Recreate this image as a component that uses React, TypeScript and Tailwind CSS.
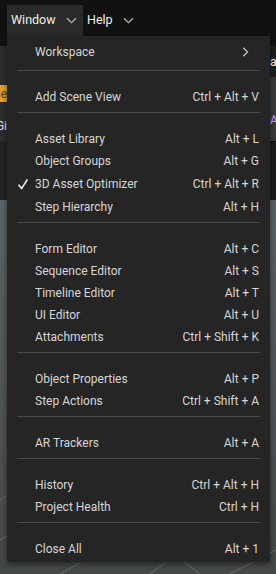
import { Fragment } from 'react';

type Item = { label: string; keys?: string; checked?: boolean; submenu?: boolean };

const sections: Item[][] = [
  [{ label: 'Workspace', submenu: true }],
  [{ label: 'Add Scene View', keys: 'Ctrl + Alt + V' }],
  [
    { label: 'Asset Library', keys: 'Alt + L' },
    { label: 'Object Groups', keys: 'Alt + G' },
    { label: '3D Asset Optimizer', keys: 'Ctrl + Alt + R', checked: true },
    { label: 'Step Hierarchy', keys: 'Alt + H' },
  ],
  [
    { label: 'Form Editor', keys: 'Alt + C' },
    { label: 'Sequence Editor', keys: 'Alt + S' },
    { label: 'Timeline Editor', keys: 'Alt + T' },
    { label: 'UI Editor', keys: 'Alt + U' },
    { label: 'Attachments', keys: 'Ctrl + Shift + K' },
  ],
  [
    { label: 'Object Properties', keys: 'Alt + P' },
    { label: 'Step Actions', keys: 'Ctrl + Shift + A' },
  ],
  [{ label: 'AR Trackers', keys: 'Alt + A' }],
  [
    { label: 'History', keys: 'Ctrl + Alt + H' },
    { label: 'Project Health', keys: 'Ctrl + H' },
  ],
  [{ label: 'Close All', keys: 'Alt + 1' }],
];

function ChevronDown() {
  return (
    <svg width="11" height="7" viewBox="0 0 11 7" fill="none" className="text-[#b5b5b5]">
      <path d="M1 1.2 L5.5 5.6 L10 1.2" stroke="currentColor" strokeWidth="1.2" />
    </svg>
  );
}

function MenuRow({ item }: { item: Item }) {
  return (
    <div className={`relative flex items-center justify-between pl-[28px] pr-[11px] ${item.checked ? 'h-[24px]' : 'h-[22px]'}`}>
      {item.checked && (
        <svg width="10" height="11" viewBox="0 0 10 11" fill="none" className="absolute left-[11px] top-[7px]">
          <path d="M1 6.2 L3.6 9.6 L9 1" stroke="#e6e6e6" strokeWidth="1.7" strokeLinecap="round" strokeLinejoin="round" />
        </svg>
      )}
      <span className="text-[12px] text-[#d6d6d6]">{item.label}</span>
      {item.keys && <span className="text-[12px] text-[#d6d6d6]">{item.keys}</span>}
      {item.submenu && (
        <svg width="7" height="10" viewBox="0 0 7 10" fill="none" className="mr-[10px] text-[#c8c8c8]">
          <path d="M1.2 0.8 L5.6 5 L1.2 9.2" stroke="currentColor" strokeWidth="1.2" />
        </svg>
      )}
    </div>
  );
}

export default function App() {
  return (
    <div className="relative h-[574px] w-[276px] overflow-hidden bg-[#111111]" style={{ fontFamily: 'Roboto, "Liberation Sans", sans-serif' }}>
      {/* Top menu bar */}
      <div className="flex h-[46px] items-start bg-[#111111] pl-[7px] pt-[5px]">
        <div className="flex h-[31px] w-[76px] items-center gap-[10px] bg-[#2a2a2a] pl-[4px]">
          <span className="text-[12.5px] text-[#eeeeee]">Window</span>
          <ChevronDown />
        </div>
        <div className="flex h-[31px] items-center gap-[10px] pl-[4px]">
          <span className="text-[12.5px] text-[#eeeeee]">Help</span>
          <ChevronDown />
        </div>
      </div>

      {/* Toolbar area behind the menu */}
      <div className="flex h-[95px]">
        <div className="flex w-[7px] flex-col overflow-hidden bg-[#2d2d2d]">
          <div className="mt-[39px] flex h-[17px] w-[7px] items-center justify-end bg-[#e3a02c] text-[12px] text-[#5a3a08]">
            <span className="whitespace-nowrap">ie</span>
          </div>
          <div className="mt-[15px] flex w-[7px] justify-end text-[12px] text-[#e0e0ff]">
            <span className="whitespace-nowrap">Gi</span>
          </div>
        </div>
        <div className="flex-1 bg-[#2d2d2d]" />
        <div className="flex w-[6px] flex-col overflow-hidden">
          <div className="flex h-[31px] items-center bg-[#1f1f1f] pt-[1px] text-[12px] text-white">
            <span className="whitespace-nowrap">at</span>
          </div>
          <div className="flex flex-1 items-end bg-[#3b3b3b] pb-[12px] text-[12px] text-[#c4a0ff]">
            <span className="whitespace-nowrap">AI</span>
          </div>
        </div>
      </div>
      <div className="flex h-[59px]">
        <div className="flex-1 border-t border-[#2a2a2a] bg-[#232323]" />
        <div className="flex-1 border-t border-[#0c0c0c] bg-[#1c1c1c]" />
      </div>

      {/* Viewport */}
      <div className="relative h-[374px] bg-gradient-to-b from-[#5d6467] to-[#454849]">
        <svg className="absolute inset-0" width="276" height="374" viewBox="0 0 276 374" fill="none">
          <path d="M0 300 L70 260 M0 340 L40 318 M150 374 L210 330 M60 374 L120 340 M230 374 L276 350 M200 374 L176 356" stroke="#6a6e6f" strokeWidth="1" />
        </svg>
      </div>

      {/* Dropdown menu */}
      <div className="absolute left-[7px] top-[36px] w-[263px] bg-[#252525] pb-[2px] pt-[5px] shadow-[0_2px_6px_rgba(0,0,0,0.5)]">
        {sections.map((section, i) => (
          <Fragment key={i}>
            {i > 0 && <div className={`mx-[10px] mb-[15px] h-px bg-[#4a4a4a] ${i === 1 ? 'mt-[7px]' : 'mt-[4px]'}`} />}
            {section.map((item) => (
              <MenuRow key={item.label} item={item} />
            ))}
          </Fragment>
        ))}
      </div>
    </div>
  );
}
